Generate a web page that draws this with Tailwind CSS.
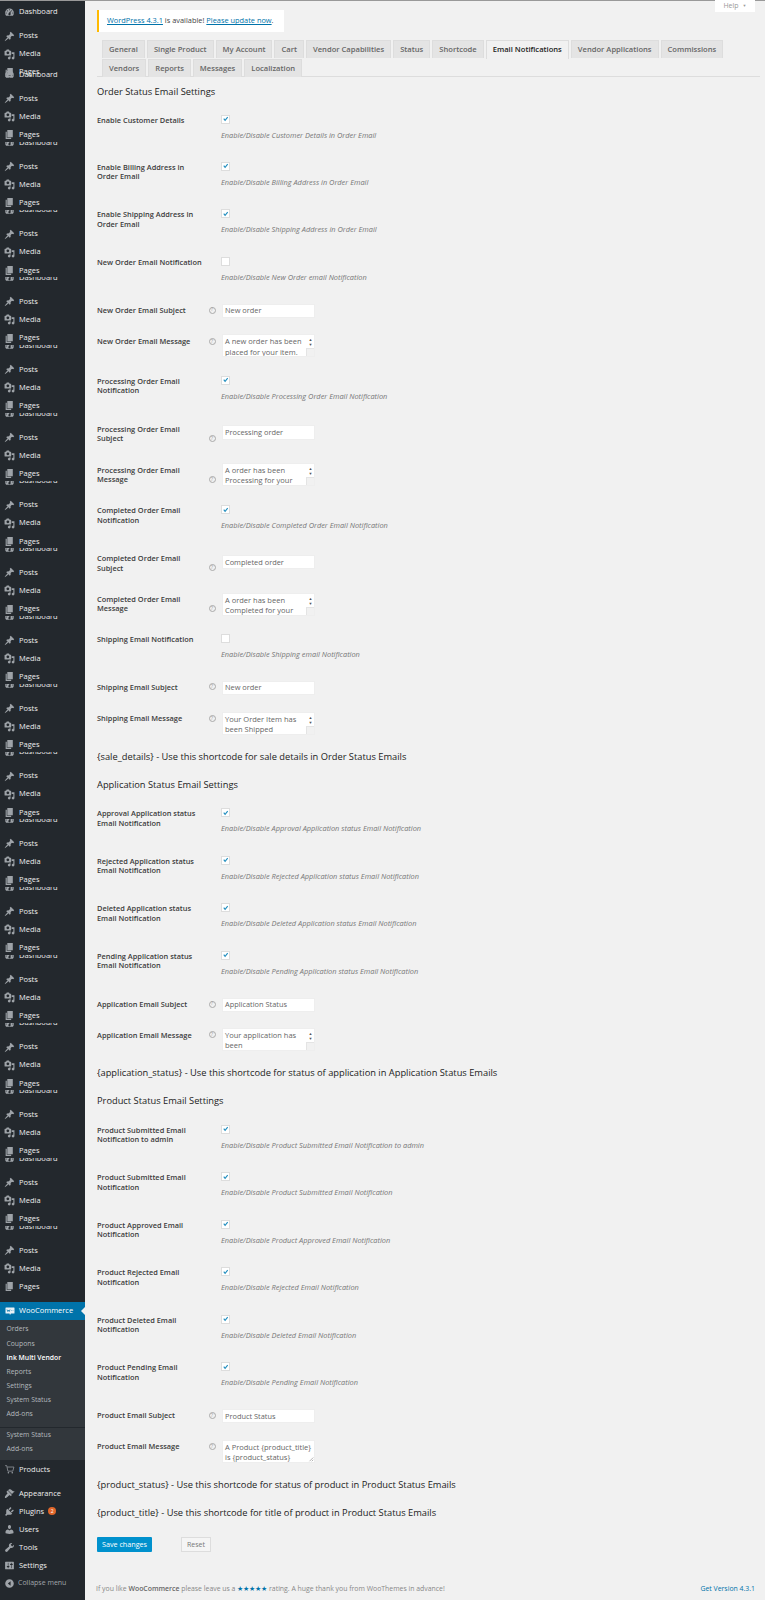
<!DOCTYPE html>
<html lang="en">
<head>
    <meta charset="UTF-8">
    <title>Ink Multi Vendor</title>
    <script src="https://cdn.jsdelivr.net/npm/@tailwindcss/browser@4"></script>
</head>
<body class="bg-[#f1f1f1] font-['Open_Sans',sans-serif] text-[#444] overflow-hidden">
<div class="flex h-[1600px] border-t border-[#999]">
    <!-- Admin menu -->
    <aside id="menu" class="w-[85px] shrink-0 h-full bg-[#23282d] text-[#eee] text-[7.5px]"></aside>

    <!-- Content -->
    <main class="relative flex-1 min-w-0 pl-[12px] pr-[5px]">
        <div class="absolute right-[10px] -top-px w-[40px] h-[12px] bg-white text-[#999] text-[7px] flex items-center justify-center gap-1">Help <span class="text-[4px]">▼</span></div>

        <div class="h-[22px] mt-[9px] w-[187px] bg-white border-l-2 border-[#ffba00] pl-[8px] flex items-center text-[7.4px]">
            <span><a class="text-[#0073aa] underline">WordPress 4.3.1</a> is available! <a class="text-[#0073aa] underline">Please update now</a>.</span>
        </div>

        <nav class="mt-[8px] ml-[5px] flex flex-wrap h-[36px] content-start text-[7.6px] font-semibold text-[#666]">
            <a class="h-[18px] px-[6px] mr-[2px] flex items-center bg-[#e4e4e4] border-t border-x border-[#ddd]">General</a>
            <a class="h-[18px] px-[6px] mr-[2px] flex items-center bg-[#e4e4e4] border-t border-x border-[#ddd]">Single Product</a>
            <a class="h-[18px] px-[6px] mr-[2px] flex items-center bg-[#e4e4e4] border-t border-x border-[#ddd]">My Account</a>
            <a class="h-[18px] px-[6px] mr-[2px] flex items-center bg-[#e4e4e4] border-t border-x border-[#ddd]">Cart</a>
            <a class="h-[18px] px-[6px] mr-[2px] flex items-center bg-[#e4e4e4] border-t border-x border-[#ddd]">Vendor Capabilities</a>
            <a class="h-[18px] px-[6px] mr-[2px] flex items-center bg-[#e4e4e4] border-t border-x border-[#ddd]">Status</a>
            <a class="h-[18px] px-[6px] mr-[2px] flex items-center bg-[#e4e4e4] border-t border-x border-[#ddd]">Shortcode</a>
            <a class="h-[19px] px-[6px] mr-[2px] flex items-center bg-[#f1f1f1] border-t border-x border-[#ddd] text-[#222]">Email Notifications</a>
            <a class="h-[18px] px-[6px] mr-[2px] flex items-center bg-[#e4e4e4] border-t border-x border-[#ddd]">Vendor Applications</a>
            <a class="h-[18px] px-[6px] mr-[2px] flex items-center bg-[#e4e4e4] border-t border-x border-[#ddd]">Commissions</a>
            <a class="h-[18px] px-[6px] mr-[2px] flex items-center bg-[#e4e4e4] border-t border-x border-[#ddd]">Vendors</a>
            <a class="h-[18px] px-[6px] mr-[2px] flex items-center bg-[#e4e4e4] border-t border-x border-[#ddd]">Reports</a>
            <a class="h-[18px] px-[6px] mr-[2px] flex items-center bg-[#e4e4e4] border-t border-x border-[#ddd]">Messages</a>
            <a class="h-[18px] px-[6px] mr-[2px] flex items-center bg-[#e4e4e4] border-t border-x border-[#ddd]">Localization</a>
        </nav>
        <div class="border-t border-[#ddd]"></div>

        <div id="form" class="pt-[7.500px]"></div>

        <div class="flex items-center">
            <button class="h-[15px] w-[55px] bg-[#0091cd] text-white text-[7.2px] rounded-[1px]">Save changes</button>
            <button class="ml-[29px] h-[15px] w-[30px] bg-[#f5f5f5] border border-[#ddd] text-[#777] text-[7px]">Reset</button>
        </div>

        <footer class="absolute left-[11px] right-[10px] top-[1583px] flex justify-between text-[6.9px] text-[#888]">
            <span>If you like <b class="font-semibold text-[#666]">WooCommerce</b> please leave us a <span class="text-[#0073aa]">★★★★★</span> rating. A huge thank you from WooThemes in advance!</span>
            <a class="text-[#0073aa]">Get Version 4.3.1</a>
        </footer>
    </main>
</div>

<script>
    const icons = {
        gauge: '<path d="M3.760 16h12.480c1.100-1.430 1.760-3.210 1.760-5.140 0-4.560-3.580-8.260-8-8.260s-8 3.700-8 8.260c0 1.930.66 3.710 1.760 5.140zM10 4c.55 0 1 .45 1 1s-.45 1-1 1-1-.45-1-1 .45-1 1-1zM6 6c.55 0 1 .45 1 1s-.45 1-1 1-1-.45-1-1 .45-1 1-1zm8 0c.55 0 1 .45 1 1s-.45 1-1 1-1-.45-1-1 .45-1 1-1zm-5.370 5.550L12 7v6c0 1.100-.9 2-2 2s-2-.9-2-2c0-.57.24-1.080.63-1.450zM4 10c.55 0 1 .45 1 1s-.45 1-1 1-1-.45-1-1 .45-1 1-1zm12 0c.55 0 1 .45 1 1s-.45 1-1 1-1-.45-1-1 .45-1 1-1z"/>',
        pin: '<path d="M10.440 3.020l1.820-1.820 6.360 6.350-1.830 1.820c-1.050-.68-2.480-.57-3.410.36l-.75.75c-.92.93-1.040 2.350-.35 3.410l-1.830 1.820-2.410-2.410-2.800 2.790c-.42.42-3.380 2.710-3.800 2.290s1.860-3.390 2.280-3.810l2.790-2.790L4.100 9.360l1.830-1.820c1.050.69 2.480.57 3.410-.36l.75-.75c.93-.92 1.050-2.350.35-3.410z"/>',
        media: '<path d="M13 11V4c0-.55-.45-1-1-1h-1.670L9 1H5L3.670 3H2c-.55 0-1 .45-1 1v7c0 .55.45 1 1 1h10c.55 0 1-.45 1-1zM7 4.500c1.380 0 2.500 1.120 2.500 2.500S8.380 9.500 7 9.500 4.500 8.380 4.500 7 5.620 4.500 7 4.500zM14 6h5v10.500c0 1.380-1.120 2.500-2.500 2.500S14 17.880 14 16.500s1.120-2.500 2.500-2.500c.17 0 .34.02.5.05V9h-3V6zm-4 8.050V13h2v3.500c0 1.380-1.120 2.500-2.500 2.500S7 17.880 7 16.500 8.120 14 9.500 14c.17 0 .34.02.5.05z"/>',
        pages: '<path d="M6 15V2h10v13H6zm-1 1h8v2H3V5h2v11z"/>',
        cart: '<path d="M2 3h3l2 10h9l2-7.500H6" fill="none" stroke="#9ea3a8" stroke-width="1.300"/><circle cx="8" cy="16" r="1.400"/><circle cx="15" cy="16" r="1.400"/>',
        brush: '<path d="M14.500 11L7.400 4l1.500-1.500c.5-.6 2.300-.5 3.500.3 1.200.8 1.400 1.300 2.900 2.100 1.200.6 2.500 1.300 4.200.9zm-.7.700L6.700 4.700 4.900 6.500c-.4.400-.4 1 0 1.400L6 9c.4.400.4 1 0 1.400-.6.600-1.400 1.600-2.200 2.400C1.600 15 1 17 2 18s3-.4 5.200-2.400c.8-.8 1.700-1.600 2.300-2.200.4-.4 1-.4 1.400 0l1.100 1c.4.400 1 .4 1.400 0z"/>',
        plug: '<path d="M13.110 4.360L9.870 7.600 8 5.730l3.240-3.240c.35-.34 1.050-.2 1.560.32.52.51.66 1.210.31 1.550zm-8 1.770l.91-1.120 9.010 9.010-1.190.84c-.71.71-2.630 1.160-3.820 1.160H6.140L4.900 17.260c-.59.59-1.540.59-2.120 0-.59-.58-.59-1.530 0-2.120l1.240-1.240v-3.880c0-1.130.4-3.190 1.090-3.890zm7.260 3.970l3.240-3.240c.34-.35 1.040-.21 1.550.31.520.51.66 1.210.31 1.550l-3.240 3.250z"/>',
        users: '<path d="M10 9.250c-2.270 0-2.730-3.440-2.730-3.440C7 4.020 7.820 2 9.970 2c2.160 0 2.980 2.020 2.710 3.810 0 0-.41 3.440-2.680 3.440zm0 2.570L12.720 10c2.390 0 4.520 2.330 4.520 4.530v2.490s-3.650 1.130-7.240 1.130c-3.650 0-7.240-1.130-7.240-1.130v-2.490c0-2.250 1.940-4.480 4.470-4.480z"/>',
        wrench: '<path d="M16.680 9.770c-1.340 1.340-3.300 1.670-4.950.99l-5.410 6.520c-.99.99-2.590.99-3.570 0-.99-.98-.99-2.580 0-3.570l6.520-5.420c-.68-1.650-.35-3.610.99-4.950 1.280-1.280 3.120-1.620 4.720-1.060l-2.890 2.890 2.820 2.820 2.860-2.870c.53 1.580.18 3.420-1.090 4.670z"/>',
        sliders: '<path d="M18 16V4c0-.55-.45-1-1-1H3c-.55 0-1 .45-1 1v12c0 .55.45 1 1 1h14c.55 0 1-.45 1-1zM8 11h1c.55 0 1 .45 1 1s-.45 1-1 1H8v1.500c0 .28-.22.5-.5.5s-.5-.22-.5-.5V13H6c-.55 0-1-.45-1-1s.45-1 1-1h1V5.500c0-.28.22-.5.5-.5s.5.22.5.5V11zm5-2h-1c-.55 0-1-.45-1-1s.45-1 1-1h1V5.500c0-.28.22-.5.5-.5s.5.22.5.5V7h1c.55 0 1 .45 1 1s-.45 1-1 1h-1v5.500c0 .28-.22.5-.5.5s-.5-.22-.5-.5V9z"/>',
        collapse: '<path d="M10 2.160c4.330 0 7.840 3.510 7.840 7.840s-3.510 7.840-7.840 7.840S2.160 14.330 2.160 10 5.670 2.160 10 2.160zm2 11.840V6l-5 4z"/>'
    };

    function icon(name) {
        return `<svg viewBox="0 0 20 20" class="w-[11px] h-[11px] shrink-0 fill-[#9ea3a8]">${icons[name]}</svg>`;
    }

    function item(name, text, extra) {
        return `<div class="h-[18px] pl-[4px] flex items-center gap-[4px]">${icon(name)}<span>${text}</span>${extra || ''}</div>`;
    }

    // Pages hides the top of the Dashboard row that follows it
    function coveredPages() {
        return `<div class="relative z-10 h-[14px] mt-[2.250px] mb-[2px] bg-[#23282d] pl-[4px] flex items-center gap-[4px]">${icon('pages')}<span>Pages</span></div>`;
    }

    let menu = `<div class="pt-[2px] mb-[6px]">${item('gauge', 'Dashboard')}</div>` + item('pin', 'Posts') + item('media', 'Media') + item('pages', 'Pages');
    menu += `<div class="-mt-[15.500px] mb-[6px]">${item('gauge', 'Dashboard')}</div>`;
    for (let i = 0; i < 17; i++) {
        menu += item('pin', 'Posts') + item('media', 'Media') + coveredPages();
        menu += `<div class="-mt-[10.500px] mb-[6px]">${item('gauge', 'Dashboard')}</div>`;
    }
    menu += item('pin', 'Posts') + item('media', 'Media') + coveredPages();
    menu += `<div class="mt-[8px] h-[18px] bg-[#0073aa] text-white pl-[5px] flex items-center gap-[4px] relative">
        <svg viewBox="0 0 20 20" class="w-[10px] h-[10px] shrink-0"><path d="M2 3h16a1 1 0 0 1 1 1v10a1 1 0 0 1-1 1h-6l-2 3-1-3H2a1 1 0 0 1-1-1V4a1 1 0 0 1 1-1z" fill="#e8f1f6"/><path d="M4 7l1.500 4L7 8l1.500 3L10 7M12.500 9h1M15.500 9h1" fill="none" stroke="#0073aa" stroke-width="1.500"/></svg>
        <span>WooCommerce</span><span class="absolute right-0 border-y-[4px] border-r-[4px] border-y-transparent border-r-[#f1f1f1]"></span></div>`;
    menu += `<div class="bg-[#32373c] text-[#b4b9be] text-[6.800px] pl-[6.500px] pt-[3px] pb-[6px]">
        <div class="h-[14.100px] flex items-center">Orders</div>
        <div class="h-[14.100px] flex items-center">Coupons</div>
        <div class="h-[14.100px] flex items-center text-white font-semibold">Ink Multi Vendor</div>
        <div class="h-[14.100px] flex items-center">Reports</div>
        <div class="h-[14.100px] flex items-center">Settings</div>
        <div class="h-[14.100px] flex items-center">System Status</div>
        <div class="h-[14.100px] flex items-center">Add-ons</div>
    </div>
    <div class="bg-[#32373c] border-t border-[#23282d] text-[#b4b9be] text-[6.800px] pl-[6.500px] pb-[4px]">
        <div class="h-[14px] flex items-center">System Status</div>
        <div class="h-[14px] flex items-center">Add-ons</div>
    </div>`;
    menu += `<div class="mb-[6.300px]">${item('cart', 'Products')}</div>`;
    menu += item('brush', 'Appearance');
    menu += item('plug', 'Plugins', '<span class="w-[8px] h-[8px] rounded-full bg-[#e0662a] text-white text-[5px] flex items-center justify-center">2</span>');
    menu += item('users', 'Users') + item('wrench', 'Tools') + item('sliders', 'Settings');
    menu += `<div class="h-[18px] pl-[4px] flex items-center gap-[3px] text-[#a0a5aa] text-[7px]">${icon('collapse')}<span>Collapse menu</span></div>`;
    document.getElementById('menu').innerHTML = menu;

    // [type, label, value, checked / two-line flag, row height]
    // h = heading, c = checkbox row, t = text input row, a = textarea row
    const rows = [
        ['h', 'Order Status Email Settings', '', false, 30.3],
        ['c', 'Enable Customer Details', 'Enable/Disable Customer Details in Order Email', true, 47],
        ['c', 'Enable Billing Address in Order Email', 'Enable/Disable Billing Address in Order Email', true, 47.7],
        ['c', 'Enable Shipping Address in Order Email', 'Enable/Disable Shipping Address in Order Email', true, 47.3],
        ['c', 'New Order Email Notification', 'Enable/Disable New Order email Notification', false, 47],
        ['t', 'New Order Email Subject', 'New order', false, 30.7],
        ['a', 'New Order Email Message', 'A new order has been placed for your item.', true, 41.3],
        ['c', 'Processing Order Email Notification', 'Enable/Disable Processing Order Email Notification', true, 49.7],
        ['t', 'Processing Order Email Subject', 'Processing order', true, 37.7],
        ['a', 'Processing Order Email Message', 'A order has been Processing for your', true, 42],
        ['c', 'Completed Order Email Notification', 'Enable/Disable Completed Order Email Notification', true, 49.7],
        ['t', 'Completed Order Email Subject', 'Completed order', true, 37.7],
        ['a', 'Completed Order Email Message', 'A order has been Completed for your', true, 41],
        ['c', 'Shipping Email Notification', 'Enable/Disable Shipping email Notification', false, 47],
        ['t', 'Shipping Email Subject', 'New order', false, 31],
        ['a', 'Shipping Email Message', 'Your Order Item has been Shipped', true, 38.7],
        ['h', '{sale_details} - Use this shortcode for sale details in Order Status Emails', '', false, 27.6],
        ['h', 'Application Status Email Settings', '', false, 30.7],
        ['c', 'Approval Application status Email Notification', 'Enable/Disable Approval Application status Email Notification', true, 47.5],
        ['c', 'Rejected Application status Email Notification', 'Enable/Disable Rejected Application status Email Notification', true, 47.5],
        ['c', 'Deleted Application status Email Notification', 'Enable/Disable Deleted Application status Email Notification', true, 47.5],
        ['c', 'Pending Application status Email Notification', 'Enable/Disable Pending Application status Email Notification', true, 46.8],
        ['t', 'Application Email Subject', 'Application Status', false, 30.4],
        ['a', 'Application Email Message', 'Your application has been', true, 38],
        ['h', '{application_status} - Use this shortcode for status of application in Application Status Emails', '', false, 27.6],
        ['h', 'Product Status Email Settings', '', false, 30.9],
        ['c', 'Product Submitted Email Notification to admin', 'Enable/Disable Product Submitted Email Notification to admin', true, 47.5],
        ['c', 'Product Submitted Email Notification', 'Enable/Disable Product Submitted Email Notification', true, 47.5],
        ['c', 'Product Approved Email Notification', 'Enable/Disable Product Approved Email Notification', true, 47.5],
        ['c', 'Product Rejected Email Notification', 'Enable/Disable Rejected Email Notification', true, 47.5],
        ['c', 'Product Deleted Email Notification', 'Enable/Disable Deleted Email Notification', true, 47.5],
        ['c', 'Product Pending Email Notification', 'Enable/Disable Pending Email Notification', true, 46.8],
        ['t', 'Product Email Subject', 'Product Status', false, 30.7],
        ['a', 'Product Email Message', 'A Product {product_title} is {product_status}', false, 38.5],
        ['h', '{product_status} - Use this shortcode for status of product in Product Status Emails', '', false, 28],
        ['h', '{product_title} - Use this shortcode for title of product in Product Status Emails', '', false, 31.2]
    ];

    const help = '<span class="absolute -right-[11.500px] bottom-[1.500px] w-[7px] h-[7px] rounded-full border border-[#aaa] text-[#999] text-[4.500px] font-normal flex items-center justify-center">?</span>';
    const labelBase = 'relative w-[107px] shrink-0 text-[7.4px] leading-[9.400px] font-semibold text-[#3c3c3c]';

    const scrollbar = `<div class="absolute right-[1px] top-[2px] w-[5px] flex flex-col items-center text-[4px] leading-[5px] text-[#555]"><span>▲</span><span>▼</span></div>
        <div class="absolute right-0 bottom-0 w-[8px] h-[8px] bg-[#f1f1f1] border-l border-t border-[#e4e4e4]"></div>`;
    const grip = '<svg viewBox="0 0 8 8" class="absolute right-0 bottom-0 w-[6px] h-[6px] stroke-[#999]"><path d="M2 7l5-5M5 7l2-2"/></svg>';

    document.getElementById('form').innerHTML = rows.map(r => {
        const [type, text, value, flag, height] = r;
        let inner = '';
        if (type === 'h') {
            inner = `<div class="text-[9.300px] leading-[14px] text-[#222]">${text}</div>`;
        }
        if (type === 'c') {
            const mark = flag ? '<svg viewBox="0 0 16 16" class="w-[8px] h-[8px] fill-[#1e8cbe]"><path d="M3 8l2-2 2 3 5-6 2 1.500L7 13z"/></svg>' : '';
            inner = `<div class="${labelBase} mt-[1px]">${text}</div><div class="ml-[17px]">
                <div class="w-[9px] h-[9px] bg-white border border-[#ddd] flex items-center justify-center">${mark}</div>
                <div class="mt-[6px] leading-[11px] text-[7.400px] italic text-[#777]">${value}</div></div>`;
        }
        if (type === 't') {
            const offset = flag ? '-mt-[0.700px]' : 'mt-[2px]';
            inner = `<div class="${labelBase} ${offset}">${text}${help}</div><div class="ml-[18px] w-[93px] h-[14.500px] bg-white border border-[#eee] pl-[2px] flex items-center text-[7.400px] text-[#666]">${value}</div>`;
        }
        if (type === 'a') {
            inner = `<div class="${labelBase} mt-[2.400px]">${text}${help}</div><div class="relative ml-[18px] w-[93px] h-[23px] bg-white border border-[#eee] pl-[2px] ${flag ? 'pr-[8px]' : 'pr-[1px]'} pt-[1px] overflow-hidden text-[7.500px] leading-[10.300px] text-[#666]">${value}${flag ? scrollbar : grip}</div>`;
        }
        return `<div class="flex items-start" style="height:${height}px">${inner}</div>`;
    }).join('');
</script>
</body>
</html>
